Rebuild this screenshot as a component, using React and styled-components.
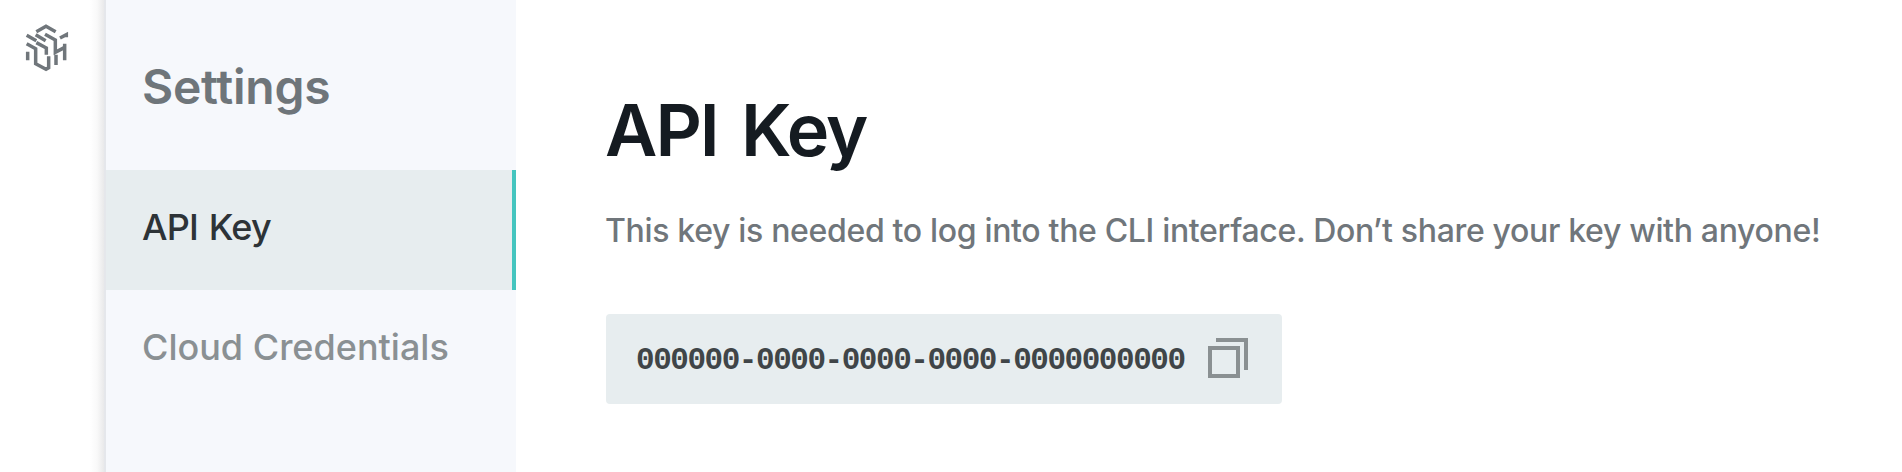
import React from 'react';
import styled, { createGlobalStyle } from 'styled-components';

const Global = createGlobalStyle`
  body { margin: 0; background: #fff; font-family: Inter, "Liberation Sans", sans-serif; overflow: hidden; }
`;
const Page = styled.div`
  display: flex;
  height: 472px;
  overflow: hidden;
`;
const Rail = styled.div`
  box-sizing: border-box;
  width: 106px;
  flex: none;
  padding: 15px 0 0 15px;
  border-right: 2px solid #e5e7eb;
  background: linear-gradient(to right, #fff 90px, #f9f9f9 97px, #e9e9ea 104px);
`;
const Sidebar = styled.nav`
  width: 410px;
  flex: none;
  background: #f6f8fc;
`;
const SidebarTitle = styled.h2`
  margin: 0;
  height: 170px;
  box-sizing: border-box;
  padding: 57px 0 0 36px;
  font-size: 48px;
  line-height: 60px;
  font-weight: 600;
  letter-spacing: -0.25px;
  color: #6e757a;
`;
const NavItem = styled.a`
  box-sizing: border-box;
  display: flex;
  align-items: center;
  height: 120px;
  padding: 0 0 6px 36px;
  font-size: 36px;
  font-weight: 500;
  letter-spacing: ${(p) => p.$spacing};
  word-spacing: ${(p) => (p.$active ? '2px' : '0')};
  color: ${(p) => (p.$active ? '#2d3337' : '#8a9093')};
  background: ${(p) => (p.$active ? '#e7edef' : 'transparent')};
  border-right: 4px solid ${(p) => (p.$active ? '#45c5bf' : 'transparent')};
`;
const Content = styled.main`
  flex: 1;
  padding: 85px 0 0 89px;
  white-space: nowrap;
`;
const Title = styled.h1`
  margin: 0;
  font-size: 72px;
  line-height: 90px;
  font-weight: 600;
  letter-spacing: -2px;
  word-spacing: 7px;
  color: #151b21;
`;
const Description = styled.p`
  margin: 36px 0 0;
  font-size: 32px;
  line-height: 40px;
  font-weight: 500;
  letter-spacing: -0.33px;
  color: #70767b;
`;
const KeyBox = styled.div`
  box-sizing: border-box;
  display: flex;
  align-items: center;
  width: 676px;
  height: 90px;
  margin: 63px 0 0 1px;
  padding: 0 0 2px 30px;
  border-radius: 4px;
  background: #e7edef;
`;
const KeyText = styled.code`
  width: 572px;
  padding-top: 4px;
  font-family: "Liberation Mono", monospace;
  font-size: 31px;
  font-weight: 700;
  letter-spacing: -1.46px;
  color: #404548;
`;

const Logo = () => (
  <svg width="65" height="65" viewBox="0 0 195 195" fill="none" stroke="#70767b" strokeWidth="10.5">
    <path d="M64 50 93 34 122 50M35 61 64 77M62 59 92 77M90 58 121 75V112L149 97M149 86V136M135 69 154 59V67M35 86 62 101V146L93 163 101 158V124M64 83 94 99V119M38 110V136M123 119V150" />
  </svg>
);
const CopyIcon = () => (
  <svg width="40" height="40" viewBox="0 0 40 40" fill="none" stroke="#8a9092" strokeWidth="4">
    <path d="M2 10H30V38H2Z M8 2H38V32" />
  </svg>
);

export default function App() {
  return (
    <Page>
      <Global />
      <Rail><Logo /></Rail>
      <Sidebar>
        <SidebarTitle>Settings</SidebarTitle>
        <NavItem $active $spacing="-0.8px">API Key</NavItem>
        <NavItem $spacing="0px">Cloud Credentials</NavItem>
      </Sidebar>
      <Content>
        <Title>API Key</Title>
        <Description>This key is needed to log into the CLI interface. Don’t share your key with anyone!</Description>
        <KeyBox>
          <KeyText>000000-0000-0000-0000-0000000000</KeyText>
          <CopyIcon />
        </KeyBox>
      </Content>
    </Page>
  );
}
